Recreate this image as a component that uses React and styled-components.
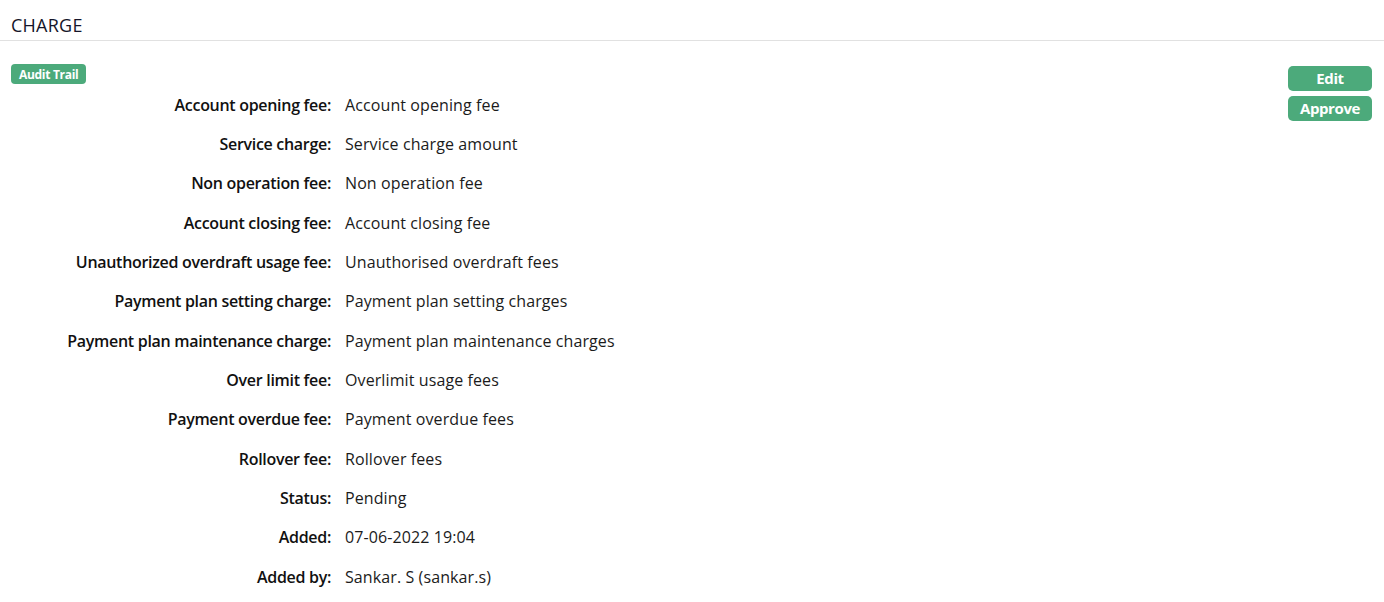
import React from "react";
import styled, { createGlobalStyle } from "styled-components";

const Global = createGlobalStyle`
  html, body { margin: 0; padding: 0; background: #fff; }
  body { font-family: "Open Sans", "Liberation Sans", sans-serif; color: #1b1b1b; }
  * { box-sizing: border-box; }
`;

const Page = styled.div`
  width: 1384px;
`;

const Header = styled.div`
  height: 41px;
  padding: 13px 11px 0;
  border-bottom: 1px solid #e1e1e1;
  font-size: 18px;
  line-height: 24px;
  letter-spacing: 0.25px;
  color: #15152a;
`;

const Body = styled.div`
  display: flex;
  justify-content: space-between;
  padding: 23px 12px 0 11px;
`;

const Main = styled.div`
  display: flex;
  flex-direction: column;
  align-items: flex-start;
`;

const Badge = styled.span`
  display: inline-flex;
  align-items: center;
  height: 20px;
  padding: 0 8px;
  border-radius: 4px;
  background: #4caa7b;
  color: #fff;
  font-size: 12px;
  font-weight: 700;
  letter-spacing: -0.3px;
`;

const Grid = styled.dl`
  display: grid;
  grid-template-columns: 320px auto;
  column-gap: 14px;
  grid-auto-rows: 39.33px;
  align-items: center;
  margin: 1px 0 0;
  font-size: 16px;
`;

const Label = styled.dt`
  text-align: right;
  font-weight: 600;
  letter-spacing: -0.3px;
  color: #111;
`;

const Value = styled.dd`
  margin: 0;
  color: #1b1b1b;
  letter-spacing: 0.1px;
`;

const Actions = styled.div`
  display: flex;
  flex-direction: column;
  gap: 5px;
  padding-top: 2px;
`;

const Button = styled.button`
  width: 84px;
  height: 25px;
  border: 0;
  border-radius: 5px;
  background: #4caa7b;
  color: #fff;
  font-family: inherit;
  font-size: 15px;
  font-weight: 700;
  letter-spacing: -0.4px;
  line-height: 23px;
  padding: 0;
  cursor: pointer;
`;

const rows = [
  ["Account opening fee", "Account opening fee"],
  ["Service charge", "Service charge amount"],
  ["Non operation fee", "Non operation fee"],
  ["Account closing fee", "Account closing fee"],
  ["Unauthorized overdraft usage fee", "Unauthorised overdraft fees"],
  ["Payment plan setting charge", "Payment plan setting charges"],
  ["Payment plan maintenance charge", "Payment plan maintenance charges"],
  ["Over limit fee", "Overlimit usage fees"],
  ["Payment overdue fee", "Payment overdue fees"],
  ["Rollover fee", "Rollover fees"],
  ["Status", "Pending"],
  ["Added", "07-06-2022 19:04"],
  ["Added by", "Sankar. S (sankar.s)"],
];

export default function App() {
  return (
    <Page>
      <Global />
      <Header>CHARGE</Header>
      <Body>
        <Main>
          <Badge>Audit Trail</Badge>
          <Grid>
            {rows.map(([l, v]) => (
              <React.Fragment key={l}>
                <Label>{l}:</Label>
                <Value>{v}</Value>
              </React.Fragment>
            ))}
          </Grid>
        </Main>
        <Actions>
          <Button>Edit</Button>
          <Button>Approve</Button>
        </Actions>
      </Body>
    </Page>
  );
}
